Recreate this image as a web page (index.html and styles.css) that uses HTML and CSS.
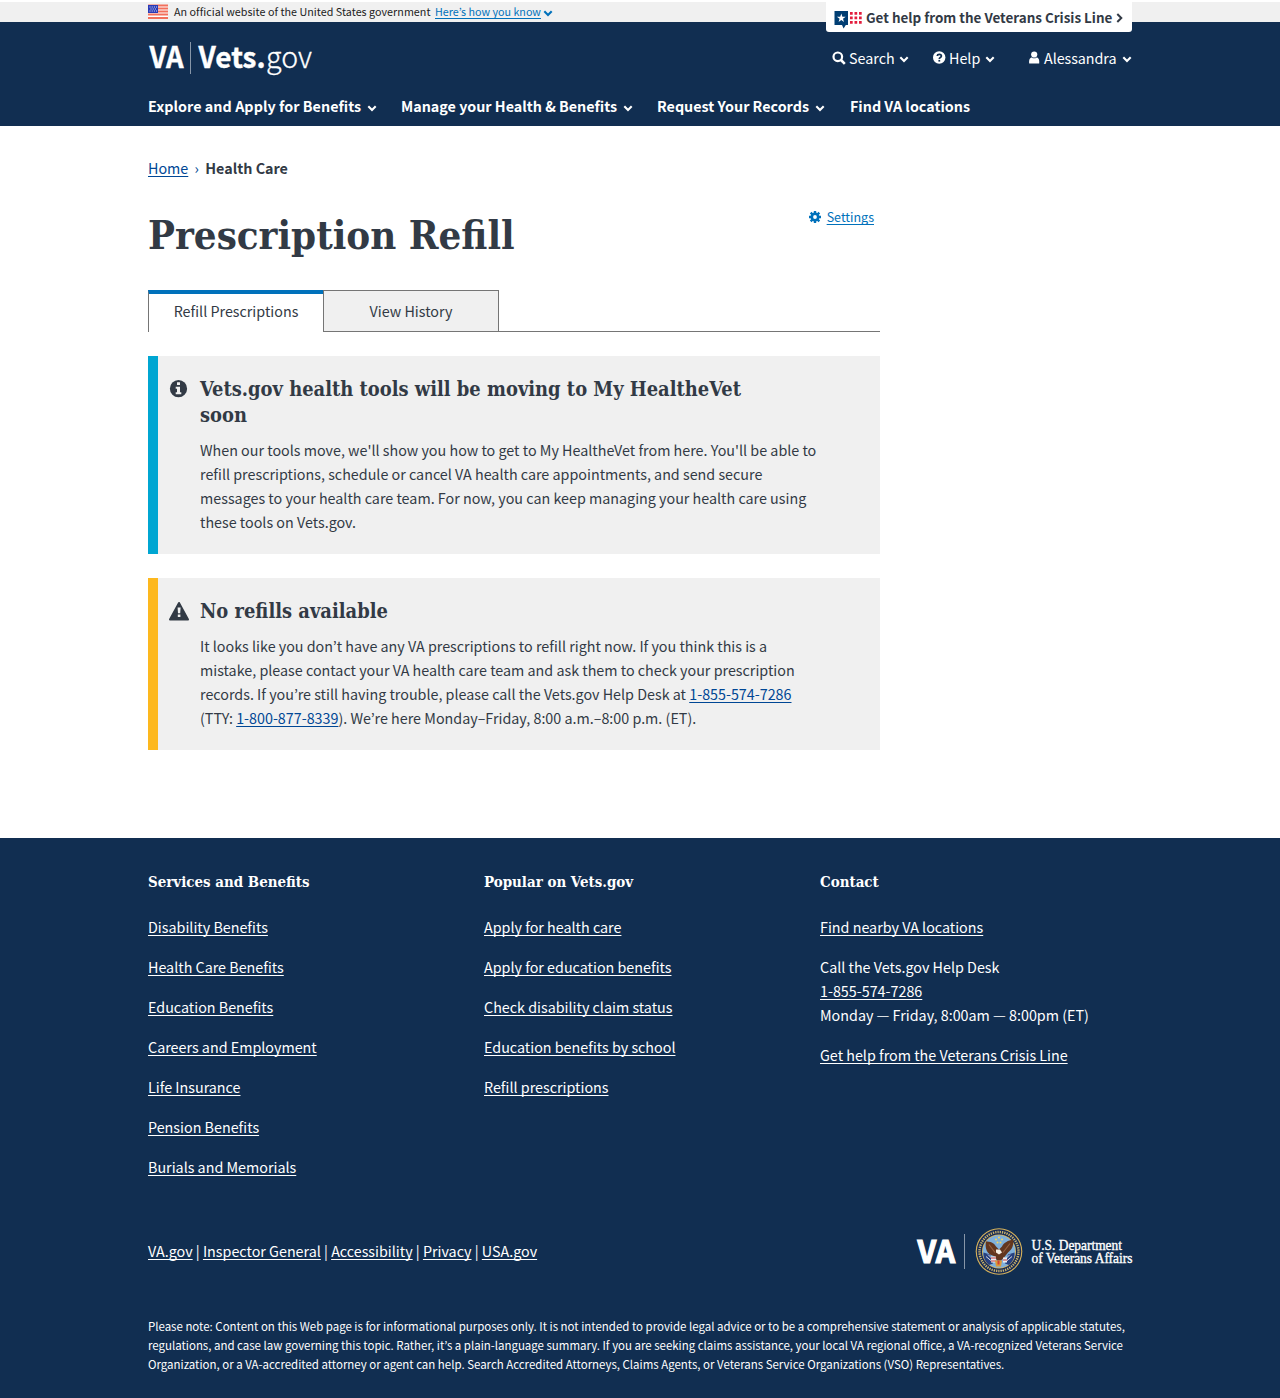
FILE: index.html
```
<!DOCTYPE html>
<html lang="en">
<head>
<meta charset="utf-8">
<title>Prescription Refill: Vets.gov</title>
<link rel="stylesheet" href="styles.css">
</head>
<body>
<svg class="defs" width="0" height="0">
  <symbol id="chev" viewBox="0 0 10 7"><path d="M1.300 1.300 5 5 8.700 1.300" fill="none" stroke="currentColor" stroke-width="2.100"/></symbol>
</svg>
<div class="banner">
  <div class="wrap banner-row">
    <svg class="flag" viewBox="0 0 20 14"><path fill="#fff" d="M0 0h20v14H0z"/><path d="M0 .5h20M0 3.500h20M0 6.500h20M0 9.500h20M0 13h20" stroke="#f2705c" stroke-width="1.800"/><path fill="#2a3bb7" d="M0 0h10v8H0z"/><path d="M1.500 2h7.500M2.500 4h6M1.500 6h7.500" stroke="#fff" stroke-width=".9" stroke-dasharray="1 1.200"/></svg>
    <span class="official">An official website of the United States government</span>
    <a class="know" href="#">Here’s how you know</a>
    <svg class="chev know-chev"><use href="#chev"/></svg>
    <a class="crisis" href="#">
      <svg class="crisis-icon" viewBox="0 0 28 19"><path fill="#003e73" d="M.5 1h13.500v14h-2.200L9.600 18.500 8 15H.5z"/><path fill="#fff" d="m7.300 3.500 1.100 3.200h3.300L9 8.700l1 3.300-2.700-2-2.700 2 1-3.300-2.700-2h3.300z"/><g fill="#e31c3d"><path d="M16 2h2.700v2.700H16zM20.500 2h2.700v2.700h-2.700zM25 2h2.700v2.700H25zM16 6.500h2.700v2.700H16zM20.500 6.500h2.700v2.700h-2.700zM25 6.500h2.700v2.700H25zM16 11h2.700v2.700H16zM20.500 11h2.700v2.700h-2.700zM25 11h2.700v2.700H25z"/></g></svg>
      <span class="crisis-text">Get help from the Veterans Crisis Line</span>
      <svg class="crisis-arrow" viewBox="0 0 7 10"><path d="M1.300 1 5.300 5l-4 4" fill="none" stroke="currentColor" stroke-width="2"/></svg>
    </a>
  </div>
</div>
<header class="header">
  <div class="wrap">
    <div class="top">
      <svg class="logo" viewBox="0 0 166 36">
        <text class="logo-b" x="1.500" y="28" font-size="29" textLength="34" lengthAdjust="spacingAndGlyphs">VA</text>
        <path d="M42.500 2v32" stroke="#8796a8"/>
        <text class="logo-b" x="50.500" y="28" font-size="29" textLength="67" lengthAdjust="spacingAndGlyphs">Vets.</text>
        <text class="logo-l" x="118" y="28" font-size="29" textLength="46" lengthAdjust="spacingAndGlyphs">gov</text>
      </svg>
      <div class="tools">
        <div class="tool search"><svg class="ico" viewBox="0 0 14 14"><circle cx="5.800" cy="5.800" r="4.300" fill="none" stroke="#fff" stroke-width="2.200"/><path d="m9 9 3.800 3.800" stroke="#fff" stroke-width="2.600"/></svg><span>Search</span><svg class="chev"><use href="#chev"/></svg></div>
        <div class="tool help"><svg class="ico" viewBox="0 0 14 14"><circle cx="6.200" cy="6.500" r="6.200" fill="#fff"/><path d="M4.200 5c.2-2.200 4.200-2.100 4.200.1 0 1.500-2.100 1.300-2.100 2.800" fill="none" stroke="#112e51" stroke-width="1.700"/><path d="M5.400 8.900h1.800v1.700H5.400z" fill="#112e51"/></svg><span>Help</span><svg class="chev"><use href="#chev"/></svg></div>
        <div class="tool user"><svg class="ico" viewBox="0 0 14 14"><circle cx="6.200" cy="3.500" r="3.100" fill="#fff"/><path d="M1.200 12.600c-.5-4 .8-6.200 2.500-6.200 1.600 1.200 3.400 1.200 5 0 1.700 0 3 2.200 2.500 6.200z" fill="#fff"/></svg><span>Alessandra</span><svg class="chev"><use href="#chev"/></svg></div>
      </div>
    </div>
    <nav class="nav">
      <a class="n1"><span>Explore and Apply for Benefits</span><svg class="chev"><use href="#chev"/></svg></a>
      <a class="n2"><span>Manage your Health &amp; Benefits</span><svg class="chev"><use href="#chev"/></svg></a>
      <a class="n3"><span>Request Your Records</span><svg class="chev"><use href="#chev"/></svg></a>
      <a class="n4"><span>Find VA locations</span></a>
    </nav>
  </div>
</header>
<main class="wrap main">
  <div class="crumbs"><a href="#">Home</a><span class="sep">›</span><strong>Health Care</strong></div>
  <div class="col">
    <div class="title-row">
      <h1>Prescription Refill</h1>
      <div class="settings"><svg viewBox="0 0 12 12"><circle cx="6" cy="6" r="3.200" fill="none" stroke="#0071bb" stroke-width="2.600"/><path d="M6 0v2.500M6 9.500V12M0 6h2.500M9.500 6H12M1.700 1.700l1.800 1.800M8.500 8.500l1.800 1.800M1.700 10.300l1.800-1.800M8.500 3.500l1.800-1.800" stroke="#0071bb" stroke-width="2.400"/></svg><a href="#">Settings</a></div>
    </div>
    <div class="tabs"><a class="tab active"><span>Refill Prescriptions</span></a><a class="tab"><span>View History</span></a><div class="tab-fill"></div></div>
    <section class="alert info">
      <svg class="alert-icon" viewBox="0 0 20 20"><circle cx="9.500" cy="9.700" r="8.600" fill="#323a45"/><path fill="#f0f0f0" d="M8 3.300h3V6H8zM6.700 7.700H11v5.500h1.300v2H6.700v-2H8V9.700H6.700z"/></svg>
      <div class="alert-body">
        <h3>Vets.gov health tools will be moving to My HealtheVet<br>soon</h3>
        <p>When our tools move, we'll show you how to get to My HealtheVet from here. You'll be able to<br>refill prescriptions, schedule or cancel VA health care appointments, and send secure<br>messages to your health care team. For now, you can keep managing your health care using<br>these tools on Vets.gov.</p>
      </div>
    </section>
    <section class="alert warn">
      <svg class="alert-icon" viewBox="0 0 20 20"><path d="M10 2 19 18.500H1z" fill="#323a45" stroke="#323a45" stroke-width="2" stroke-linejoin="round"/><path fill="#f0f0f0" d="M8.600 6.500h3l-.4 5.800H9zM8.800 13.500h2.600V16H8.800z"/></svg>
      <div class="alert-body">
        <h3>No refills available</h3>
        <p>It looks like you don’t have any VA prescriptions to refill right now. If you think this is a<br>mistake, please contact your VA health care team and ask them to check your prescription<br>records. If you’re still having trouble, please call the Vets.gov Help Desk at <a href="#">1-855-574-7286</a><br>(TTY: <a href="#">1-800-877-8339</a>). We’re here Monday–Friday, 8:00 a.m.–8:00 p.m. (ET).</p>
      </div>
    </section>
  </div>
</main>
<footer class="footer">
  <div class="wrap">
    <div class="cols">
      <div><h4>Services and Benefits</h4>
        <ul><li><a href="#">Disability Benefits</a></li><li><a href="#">Health Care Benefits</a></li><li><a href="#">Education Benefits</a></li><li><a href="#">Careers and Employment</a></li><li><a href="#">Life Insurance</a></li><li><a href="#">Pension Benefits</a></li><li><a href="#">Burials and Memorials</a></li></ul></div>
      <div><h4>Popular on Vets.gov</h4>
        <ul><li><a href="#">Apply for health care</a></li><li><a href="#">Apply for education benefits</a></li><li><a href="#">Check disability claim status</a></li><li><a href="#">Education benefits by school</a></li><li><a href="#">Refill prescriptions</a></li></ul></div>
      <div><h4>Contact</h4>
        <ul><li><a href="#">Find nearby VA locations</a></li><li>Call the Vets.gov Help Desk<br><a href="#">1-855-574-7286</a><br>Monday — Friday, 8:00am — 8:00pm (ET)</li><li><a href="#">Get help from the Veterans Crisis Line</a></li></ul></div>
    </div>
    <div class="bottom">
      <div class="legal"><a href="#">VA.gov</a> | <a href="#">Inspector General</a> | <a href="#">Accessibility</a> | <a href="#">Privacy</a> | <a href="#">USA.gov</a></div>
      <svg class="seal" viewBox="0 0 216 48">
        <text class="logo-b heavy" x="1.500" y="34.500" font-size="31.500" textLength="37.500" lengthAdjust="spacingAndGlyphs">VA</text>
        <path d="M48.500 6v35" stroke="#8796a8"/>
        <g transform="translate(83 23.500)">
          <circle r="23.300" fill="#d9b45a"/><circle r="22.200" fill="#162a55"/>
          <circle r="19.500" fill="none" stroke="#c9b36c" stroke-width="2.400" stroke-dasharray="1.300 1"/>
          <circle r="17" fill="#e0b858"/><circle r="16.200" fill="#7fb0dc"/>
          <path d="M-15.500 1-9 3l3 9-4 1.500C-14 10-16 6-15.500 1zM15.500 1 9 3 6 12l4 1.500C14 10 16 6 15.500 1z" fill="#27407f"/>
          <path d="M-13 5l6 5M-11 3l5 5M13 5l-6 5M11 3 6 8" stroke="#d8dbe8"/>
          <path d="M-13-10c4 0 8 1 10 5l3 3 3-3c2-4 6-6 11-7 1 6-1 10-5 13L5 6 2 9h-4l-2-4-5-2c-4-3-5-8-4-13z" fill="#63361f"/>
          <path d="m-10-7 6 8M11-8 4 1" stroke="#936041" stroke-width="1.200"/>
          <path d="M-3-2h4l2 3-3 2-3-2z" fill="#f5eee3"/><path d="M-8 5h5v6h-5zM4 6h4v5H4z" fill="#eee"/><path d="M-8 6.500h5M-8 9.500h5M4 8.500h4" stroke="#c43a42"/>
          <path d="M-4 9h7l-1 6h-5z" fill="#dd9b38"/><path d="M-1.500 9h2v4h-2z" fill="#cf3e36"/>
          <g fill="#f7d65c"><circle cy="-14" r="1"/><circle cx="-3" cy="-12" r="1"/><circle cx="3" cy="-12" r="1"/><circle cx="-1.500" cy="-9" r="1"/><circle cx="1.500" cy="-9" r="1"/></g>
        </g>
        <text class="dept" x="115.500" y="21.500" textLength="90.500" lengthAdjust="spacingAndGlyphs">U.S. Department</text>
        <text class="dept" x="115.500" y="35" textLength="101" lengthAdjust="spacingAndGlyphs">of Veterans Affairs</text>
      </svg>
    </div>
    <p class="note">Please note: Content on this Web page is for informational purposes only. It is not intended to provide legal advice or to be a comprehensive statement or analysis of applicable statutes,<br>regulations, and case law governing this topic. Rather, it’s a plain-language summary. If you are seeking claims assistance, your local VA regional office, a VA-recognized Veterans Service<br>Organization, or a VA-accredited attorney or agent can help. Search Accredited Attorneys, Claims Agents, or Veterans Service Organizations (VSO) Representatives.</p>
  </div>
</footer>
</body>
</html>
```
FILE: styles.css
```
* { box-sizing: border-box; }
body { margin: 0; background: #fff; color: #323a45; font: 14.32px/24px "Noto Sans CJK KR", "Open Sans", sans-serif; white-space: nowrap; }
h1, h3, h4, p, ul { margin: 0; padding: 0; }
h1, h3, h4 { font-family: "DejaVu Serif Condensed", "DejaVu Serif", serif; font-weight: 700; }
svg { display: block; flex: none; overflow: visible; }
.defs { position: absolute; }
a { color: #004795; text-decoration: underline; text-decoration-thickness: 1px; text-underline-offset: 2px; text-decoration-skip-ink: none; }
.wrap { width: 984px; margin: 0 auto; }
.chev { width: 10px; height: 7px; }

.banner { background: #f0f0f0; border-top: 2px solid #fff; height: 22px; }
.banner-row { display: flex; align-items: center; height: 20px; font-size: 10.74px; color: #212121; }
.flag { width: 20px; height: 14px; margin-right: 6px; }
.official { width: 261px; letter-spacing: .035px; }
.know { color: #0071bb; }
.know-chev { color: #0071bb; margin: 2px 0 0 2px; }
.crisis { display: flex; align-items: center; align-self: flex-start; position: relative; z-index: 1; height: 30px; width: 306px; margin-left: auto; padding-left: 8px; background: #fff; border-radius: 0 0 3px 3px; color: #323a45; font-size: 13.43px; font-weight: 700; text-decoration: none; }
.crisis-icon { width: 28px; height: 19px; margin: 4px 4px 0 0; }
.crisis-arrow { width: 7px; height: 10px; margin: 2px 0 0 4px; }

.header { background: #112e51; color: #fff; height: 104px; }
.top { display: flex; justify-content: space-between; height: 72px; padding-top: 18px; }
.logo { width: 166px; height: 36px; }
.logo-b { fill: #fff; stroke: #fff; stroke-width: .4px; font-weight: 700; font-family: "Noto Sans CJK KR", sans-serif; }
.logo-b.heavy { stroke-width: 1.2px; }
.logo-l { fill: #fff; stroke: #fff; stroke-width: .3px; font-weight: 300; font-family: "Noto Sans CJK KR", sans-serif; }
.tools { display: flex; height: 35px; align-items: center; }
.tool { display: flex; align-items: center; }
.tool .ico { width: 14px; height: 14px; margin: 1px 3px 0 0; }
.tool .chev { margin: 4px 0 0 auto; }
.search { width: 77px; margin-right: 24px; }
.help { width: 62px; margin-right: 33px; }
.help .ico, .user .ico { margin-right: 2px; }
.user { width: 104px; }
.user span { letter-spacing: -.05px; }
.nav { display: flex; }
.nav a { display: flex; align-items: center; color: #fff; font-weight: 700; text-decoration: none; line-height: 24px; }
.nav .chev { margin: 4px 0 0 6px; }
.n1 { width: 253px; letter-spacing: .045px; }
.n2 { width: 256px; }
.n3 { width: 193px; }

.main { height: 712px; padding-top: 30px; }
.crumbs { display: flex; }
.sep { color: #004795; width: 17px; text-align: center; }
.crumbs strong { font-weight: 700; }
.col { width: 732px; }
.title-row { display: flex; justify-content: space-between; height: 110px; padding: 25px 6px 0 0; }
h1 { font-size: 39.85px; line-height: 60px; }
.settings { display: flex; align-items: center; height: 24px; font-size: 12.5px; }
.settings svg { width: 12px; height: 12px; margin-right: 6px; }
.settings a { color: #0071bb; }
.tabs { display: flex; height: 42px; }
.tab { width: 175px; border: 1px solid #757575; border-right: 0; background: #f0f0f0; text-align: center; line-height: 40px; color: #323a45; text-decoration: none; }
.tab:nth-child(2) { width: 176px; border-right: 1px solid #757575; }
.tab.active { background: #fff; border-top: 4px solid #0071bb; border-bottom: 0; line-height: 34px; }
.tab-fill { flex: 1; border-bottom: 1px solid #757575; }
.alert { display: flex; margin-top: 24px; background: #f0f0f0; border-left: 10px solid #00a6d2; padding: 20px 0 0 11px; height: 198px; }
.alert.warn { border-color: #fdb81e; height: 172px; }
.alert-icon { width: 20px; height: 20px; margin: 3px 11px 0 0; }
.alert h3 { font-size: 19.92px; line-height: 26px; margin-bottom: 10px; }

.footer { background: #112e51; color: #fff; height: 560px; padding-top: 32px; }
.footer a { color: #fff; }
.cols { display: grid; grid-template-columns: repeat(3, 336px); height: 358px; }
h4 { font-size: 14.95px; line-height: 24px; margin-bottom: 21px; }
ul { list-style: none; }
li { margin-bottom: 16px; }
.bottom { display: flex; justify-content: space-between; align-items: center; height: 48px; }
.legal { padding-bottom: 2px; }
.seal { width: 216px; height: 48px; }
.dept { fill: #fff; stroke: #fff; stroke-width: .35px; font: 400 14px "Liberation Serif", serif; }
.note { margin-top: 41px; font-size: 11.46px; line-height: 19px; }
```
